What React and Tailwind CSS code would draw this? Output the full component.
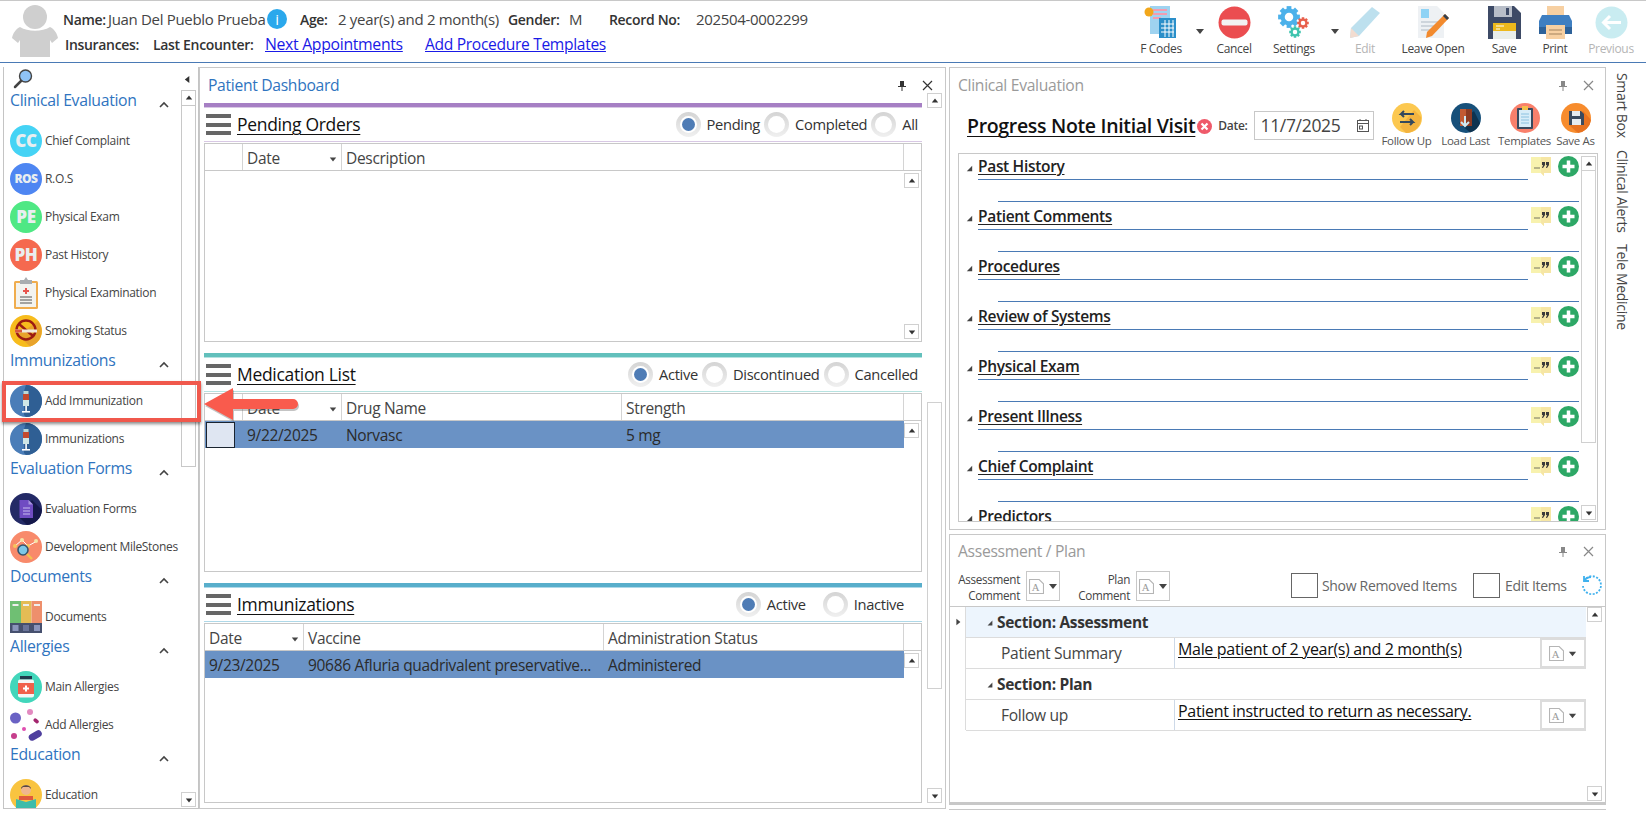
import { Fragment } from 'react'

const sideGroups = [
  { title: 'Clinical Evaluation', items: [['Chief Complaint', 'cc'], ['R.O.S', 'ros'], ['Physical Exam', 'pe'], ['Past History', 'ph'], ['Physical Examination', 'clip'], ['Smoking Status', 'smoke']] },
  { title: 'Immunizations', items: [['Add Immunization', 'syringe'], ['Immunizations', 'syringe']] },
  { title: 'Evaluation Forms', items: [['Evaluation Forms', 'form'], ['Development MileStones', 'mile']] },
  { title: 'Documents', items: [['Documents', 'docs']] },
  { title: 'Allergies', items: [['Main Allergies', 'bottle'], ['Add Allergies', 'pills']] },
  { title: 'Education', items: [['Education', 'edu']] },
]

const clinicalRows = ['Past History', 'Patient Comments', 'Procedures', 'Review of Systems', 'Physical Exam', 'Present Illness', 'Chief Complaint', 'Predictors']

function Tri({ dir = 'up', color = '#444', size = 8 }) {
  const pts = { up: '1,7 9,7 5,2', down: '1,3 9,3 5,8', left: '7,1 7,9 2,5', right: '3,1 3,9 8,5', corner: '8,2 8,8 2,8' }
  return (
    <svg width={size} height={size} viewBox="0 0 10 10" className="shrink-0">
      <polygon points={pts[dir]} fill={color} />
    </svg>
  )
}

function ScrollBtn({ dir, className = '' }) {
  return (
    <div className={`w-[15px] h-[15px] border border-[#d0d0d0] bg-white flex items-center justify-center shrink-0 ${className}`}>
      <Tri dir={dir} color="#333" />
    </div>
  )
}

function Gear({ cx, cy, r, color }) {
  const teeth = [0, 45, 90, 135]
  return (
    <g>
      {teeth.map(a => (
        <rect key={a} x={cx - r * 0.28} y={cy - r * 1.28} width={r * 0.56} height={r * 2.56} fill={color} transform={`rotate(${a} ${cx} ${cy})`} />
      ))}
      <circle cx={cx} cy={cy} r={r} fill={color} />
      <circle cx={cx} cy={cy} r={r * 0.5} fill="#fff" />
    </g>
  )
}

function Syringe() {
  return (
    <svg width="32" height="32" viewBox="0 0 32 32">
      <circle cx="16" cy="16" r="16" fill="#4a7db8" />
      <path d="M16 0a16 16 0 0 1 0 32l-2-2V6z" fill="#2f5f94" />
      <rect x="13.5" y="6" width="5" height="3" fill="#b9d8d8" />
      <rect x="13" y="9" width="6" height="6" fill="#c2492f" />
      <rect x="13" y="15" width="6" height="6" fill="#cfe6e6" />
      <rect x="15.3" y="21" width="1.6" height="5" fill="#fff" />
      <rect x="12" y="26" width="8" height="1.6" fill="#fff" />
    </svg>
  )
}

function LetterIcon({ text, bg, size = 'text-[17px]' }) {
  return (
    <div className={`w-[32px] h-[32px] rounded-full flex items-center justify-center font-extrabold text-[#e9eef0] ${size} ${bg}`}>{text}</div>
  )
}

function SideIcon({ kind }) {
  if (kind === 'cc') return <LetterIcon text="CC" bg="bg-[#45d3f5]" />
  if (kind === 'ros') return <LetterIcon text="ROS" bg="bg-[#4e86f2]" size="text-[12px] tracking-[-0.5px]" />
  if (kind === 'pe') return <LetterIcon text="PE" bg="bg-[#4fe884]" />
  if (kind === 'ph') return <LetterIcon text="PH" bg="bg-[#f5694f]" />
  if (kind === 'syringe') return <Syringe />
  if (kind === 'clip') return (
    <svg width="32" height="32" viewBox="0 0 32 32">
      <rect x="4" y="4" width="24" height="28" rx="1.5" fill="#f0ad4e" />
      <rect x="6" y="6" width="20" height="24" fill="#f3f3ef" />
      <path d="M10 7V3h4l2-3 2 3h4v4z" fill="#a9adb0" />
      <path d="M16 11v6M13 14h6" stroke="#e8554e" strokeWidth="2" />
      <path d="M10 20h12M10 23h12M10 26h12" stroke="#555" strokeWidth="1.2" />
    </svg>
  )
  if (kind === 'smoke') return (
    <svg width="32" height="32" viewBox="0 0 32 32">
      <circle cx="16" cy="16" r="16" fill="#f7bc1d" />
      <path d="M28 6a16 16 0 0 1-8 25.5L8 20z" fill="#e8a32c" />
      <circle cx="16" cy="15" r="9.5" fill="none" stroke="#9c1c12" strokeWidth="2.4" />
      <path d="M9 9l14 12" stroke="#9c1c12" strokeWidth="2.4" />
      <rect x="5" y="14.5" width="22" height="3" fill="#f2e9dc" />
      <rect x="5" y="14.5" width="7" height="3" fill="#d9573f" />
    </svg>
  )
  if (kind === 'form') return (
    <svg width="32" height="32" viewBox="0 0 32 32">
      <circle cx="16" cy="16" r="16" fill="#232a66" />
      <path d="M22 7l10 10a16 16 0 0 1-15 15l-8-8z" fill="#14184a" />
      <path d="M9.500 7h9l4.500 4.500V25h-13.500z" fill="#6f4cc2" />
      <path d="M18.500 7v4.500h4.500z" fill="#a795de" />
      <path d="M13 15h7M13 18h7M13 21h7" stroke="#c9bdf0" strokeWidth="1" />
    </svg>
  )
  if (kind === 'mile') return (
    <svg width="32" height="32" viewBox="0 0 32 32">
      <circle cx="16" cy="16" r="16" fill="#f88a6b" />
      <path d="M5 15l7-6 6 6 9-5" stroke="#fff" strokeWidth="1" fill="none" />
      <circle cx="5" cy="15" r="2" fill="#f7c65c" /><circle cx="12" cy="9" r="2" fill="#f5e3a5" /><circle cx="18" cy="15" r="2" fill="#f7c65c" /><circle cx="26" cy="10" r="2" fill="#f5e3a5" />
      <circle cx="13" cy="19" r="5" fill="#7cc7e6" stroke="#35536b" strokeWidth="1.6" />
      <path d="M17 23l5 5" stroke="#f2c14e" strokeWidth="2.4" />
    </svg>
  )
  if (kind === 'docs') return (
    <svg width="32" height="32" viewBox="0 0 32 32">
      <rect x="0" y="0" width="11" height="32" fill="#6fbf73" /><rect x="11" y="0" width="10.500" height="32" fill="#e4bc55" /><rect x="21.500" y="0" width="10.500" height="32" fill="#ee8f6c" />
      <rect x="0" y="22" width="32" height="10" fill="#46506e" />
      <rect x="2.500" y="24" width="6" height="6" fill="#8b95bb" /><rect x="13" y="24" width="6" height="6" fill="#6a7499" /><rect x="24" y="24" width="6" height="6" fill="#8b95bb" />
      <rect x="2.500" y="3" width="6" height="2" fill="#eee" /><rect x="13" y="3" width="6" height="2" fill="#eee" /><rect x="24" y="3" width="6" height="2" fill="#eee" />
    </svg>
  )
  if (kind === 'bottle') return (
    <svg width="32" height="32" viewBox="0 0 32 32">
      <circle cx="16" cy="16" r="16" fill="#42d6bb" />
      <rect x="10" y="5" width="12" height="3.500" fill="#1f3b4d" />
      <rect x="8" y="8.500" width="16" height="18" rx="2" fill="#f4f6f6" />
      <rect x="8" y="12" width="16" height="11" fill="#f0614b" />
      <path d="M16 14.500v6M13 17.500h6" stroke="#fff" strokeWidth="2" />
    </svg>
  )
  if (kind === 'pills') return (
    <svg width="32" height="32" viewBox="0 0 32 32">
      <circle cx="5.500" cy="9" r="5.500" fill="#6a62c4" />
      <circle cx="20" cy="3" r="3" fill="#e28ac0" />
      <rect x="23" y="10" width="6" height="3.600" rx="1.800" fill="#a3256e" transform="rotate(40 26 12)" />
      <circle cx="14" cy="20" r="2" fill="#e04fb0" />
      <circle cx="4" cy="27" r="3" fill="#c63f8c" />
      <rect x="18" y="23" width="14" height="7" rx="3.500" fill="#4f3f9e" transform="rotate(-30 25 26)" />
    </svg>
  )
  return (
    <svg width="32" height="32" viewBox="0 0 32 32">
      <circle cx="16" cy="16" r="16" fill="#f9c440" />
      <circle cx="16" cy="11" r="5" fill="#f0b68e" />
      <path d="M11 10c0-5 10-5 10 0l-2-2h-6z" fill="#5a4a42" />
      <path d="M9 17h14v4H9z" fill="#e05a3c" />
      <path d="M6 20l10 3 10-3v12H6z" fill="#3dbcaa" />
    </svg>
  )
}

function Sidebar() {
  return (
    <div className="w-[196px] h-[742px] ml-[3px] shrink-0 border-l border-r border-b border-[#c4c4c4] flex flex-col overflow-hidden">
      <div className="h-[22px] shrink-0 flex items-center justify-between pl-[9px] pr-[6px] mt-[1px]">
        <svg width="20" height="20" viewBox="0 0 20 20">
          <path d="M8 12L2 18" stroke="#444" strokeWidth="2.500" strokeLinecap="round" />
          <circle cx="12.500" cy="7" r="6" fill="#8fc3f7" stroke="#444" strokeWidth="1.400" />
        </svg>
        <Tri dir="left" color="#333" size={9} />
      </div>
      <div className="flex flex-1 min-h-0">
        <div className="w-[177px] overflow-hidden pl-[6px]">
          {sideGroups.map(g => (
            <Fragment key={g.title}>
              <div className="h-[22px] mb-[10px] flex items-center justify-between pr-[12px] text-[15.800px] text-[#2f74c0] leading-none">
                <span>{g.title}</span>
                <svg width="10" height="7" viewBox="0 0 10 7" className="mt-[6px]"><path d="M1 6l4-4 4 4" fill="none" stroke="#444" strokeWidth="1.600" /></svg>
              </div>
              {g.items.map(([label, kind]) => (
                <div key={label} className="h-[38px] flex items-center gap-[3px] text-[12px] text-[#444]">
                  <SideIcon kind={kind} />
                  <span>{label}</span>
                </div>
              ))}
            </Fragment>
          ))}
        </div>
        <div className="w-[15px] flex flex-col">
          <div className="h-[377px] border border-[#c8c8c8] flex flex-col">
            <div className="h-[15px] border-b border-[#c8c8c8] flex items-center justify-center"><Tri dir="up" color="#333" /></div>
          </div>
          <div className="flex-1" />
          <ScrollBtn dir="down" className="mb-[1px]" />
        </div>
      </div>
    </div>
  )
}

function Radio({ label, checked }) {
  return (
    <div className="flex items-center gap-[6px]">
      <div className="w-[25px] h-[25px] rounded-full bg-gradient-to-b from-[#d4d4d4] to-[#f0f0f0] flex items-center justify-center">
        <div className="w-[17px] h-[17px] rounded-full bg-white flex items-center justify-center">
          {checked && <div className="w-[13px] h-[13px] rounded-full bg-[#4f7cb5]" />}
        </div>
      </div>
      <span>{label}</span>
    </div>
  )
}

function Hamburger() {
  return (
    <div className="w-[25px] h-[21px] flex flex-col justify-between shrink-0">
      <div className="h-[4px] bg-[#666]" />
      <div className="h-[4px] bg-[#666]" />
      <div className="h-[4px] bg-[#666]" />
    </div>
  )
}

function Section({ title, lineClass, lightClass, radios, radioClass, columns, row, tableH, downArrow }) {
  return (
    <div className="w-[718px]">
      <div className={`h-[4px] ${lineClass}`} />
      <div className={`h-[1px] ${lightClass}`} />
      <div className="h-[33px] flex items-center pl-[2px] text-[14.700px] text-[#333]">
        <Hamburger />
        <span className="ml-[6px] text-[17.500px] text-[#111] underline underline-offset-[3px] decoration-1">{title}</span>
        <div className={`flex-1 flex items-center justify-end ${radioClass}`}>{radios}</div>
      </div>
      <div className={`h-[1px] mb-[1px] ${lightClass}`} />
      <div className={`border border-[#c8c8c8] flex flex-col ${tableH}`}>
        <div className="h-[27px] shrink-0 border-b border-[#c8c8c8] flex text-[15.500px] text-[#444]">
          {columns.map(c => (
            <div key={c.name || 'x'} className={`${c.w} border-r border-[#d4d4d4] flex items-center justify-between px-[4px] pt-[3px]`}>
              <span>{c.name}</span>
              {c.sort && <Tri dir="down" color="#444" />}
            </div>
          ))}
        </div>
        <div className="flex-1 min-h-0 flex">
          <div className="w-[699px]">{row}</div>
          <div className="flex-1 flex flex-col justify-between pt-[2px] pb-[2px]">
            <ScrollBtn dir="up" />
            {downArrow && <ScrollBtn dir="down" />}
          </div>
        </div>
      </div>
    </div>
  )
}

function PanelTitle({ title, active }) {
  return (
    <div className={`flex items-center justify-between text-[15.700px] ${active ? 'text-[#2f74c0]' : 'text-[#9a9a9a]'}`}>
      <span>{title}</span>
      <div className="flex items-center gap-[15px]">
        <svg width="10" height="12" viewBox="0 0 10 12"><path d="M3 1h4v5h2v1H5.500v4h-1V7H1V6h2z" fill={active ? '#333' : '#888'} /></svg>
        <svg width="11" height="11" viewBox="0 0 11 11"><path d="M1 1l9 9M10 1l-9 9" stroke={active ? '#333' : '#888'} strokeWidth="1.200" /></svg>
      </div>
    </div>
  )
}

function Dashboard() {
  return (
    <div className="w-[747px] h-[742px] shrink-0 border border-[#c8c8c8] flex flex-col">
      <div className="w-[733px] h-[35px] pl-[8px] pt-[6px]"><PanelTitle title="Patient Dashboard" active /></div>
      <div className="flex flex-1 min-h-0 pl-[4px]">
        <div className="flex flex-col gap-[11px]">
          <Section
            title="Pending Orders"
            lineClass="bg-[#a67fc4]"
            lightClass="bg-[#d8c8e4]"
            radioClass="gap-[4px] pr-[4px]"
            radios={<>
              <Radio label="Pending" checked /><Radio label="Completed" /><Radio label="All" />
            </>}
            columns={[{ name: '', w: 'w-[38px]' }, { name: 'Date', w: 'w-[99px]', sort: true }, { name: 'Description', w: 'w-[562px]' }]}
            tableH="h-[199px]"
            downArrow
          />
          <Section
            title="Medication List"
            lineClass="bg-[#62c0bc]"
            lightClass="bg-[#b6e2e0]"
            radioClass="gap-[4px] pr-[4px]"
            radios={<>
              <Radio label="Active" checked /><Radio label="Discontinued" /><Radio label="Cancelled" />
            </>}
            columns={[{ name: '', w: 'w-[38px]' }, { name: 'Date', w: 'w-[99px]', sort: true }, { name: 'Drug Name', w: 'w-[280px]' }, { name: 'Strength', w: 'w-[282px]' }]}
            tableH="h-[179px]"
            row={
              <div className="h-[27px] bg-[#6a92c5] flex items-center text-[15.500px] text-[#2b2b2b]">
                <div className="w-[38px] pl-[1px]"><div className="w-[29px] h-[26px] bg-[#dfe6f2] border border-[#1a2430]" /></div>
                <div className="w-[99px] px-[4px] pt-[2px]">9/22/2025</div>
                <div className="w-[280px] px-[4px] pt-[2px]">Norvasc</div>
                <div className="px-[4px] pt-[2px]">5 mg</div>
              </div>
            }
          />
          <Section
            title="Immunizations"
            lineClass="bg-[#58aecb]"
            lightClass="bg-[#aed8e8]"
            radioClass="gap-[17px] pr-[18px]"
            radios={<>
              <Radio label="Active" checked /><Radio label="Inactive" />
            </>}
            columns={[{ name: 'Date', w: 'w-[99px]', sort: true }, { name: 'Vaccine', w: 'w-[300px]' }, { name: 'Administration Status', w: 'w-[300px]' }]}
            tableH="h-[180px]"
            row={
              <div className="h-[27px] bg-[#6a92c5] flex items-center text-[15.500px] text-[#2b2b2b]">
                <div className="w-[99px] px-[4px] pt-[2px]">9/23/2025</div>
                <div className="w-[300px] px-[4px] pt-[2px] whitespace-nowrap">90686 Afluria quadrivalent preservative...</div>
                <div className="px-[4px] pt-[2px]">Administered</div>
              </div>
            }
          />
        </div>
        <div className="w-[15px] ml-[5px] flex flex-col -mt-[10px] pb-[5px]">
          <ScrollBtn dir="up" />
          <div className="h-[287px] mt-[294px] border border-[#d0d0d0]" />
          <div className="flex-1" />
          <ScrollBtn dir="down" />
        </div>
      </div>
    </div>
  )
}

function ActionIcon({ kind }) {
  if (kind === 'follow') return (
    <svg width="30" height="30" viewBox="0 0 30 30">
      <circle cx="15" cy="15" r="15" fill="#fcc850" />
      <path d="M22 7L29 14a15 15 0 0 1-15 16L8 24z" fill="#f3b33f" />
      <path d="M22 11H9l3-3M9 11l3 3M8 19h13l-3-3M21 19l-3 3" stroke="#34495e" strokeWidth="2" fill="none" />
    </svg>
  )
  if (kind === 'load') return (
    <svg width="30" height="30" viewBox="0 0 30 30">
      <circle cx="15" cy="15" r="15" fill="#17507a" />
      <path d="M23 8l6 12a15 15 0 0 1-10 9.500L8 20z" fill="#0e3350" />
      <rect x="9" y="6" width="12" height="17" fill="#c25a33" />
      <rect x="15" y="6" width="6" height="17" fill="#8c3a22" />
      <path d="M14 13v10M10 19l4 4 4-4" stroke="#cfe8f2" strokeWidth="2" fill="none" />
    </svg>
  )
  if (kind === 'templates') return (
    <svg width="30" height="30" viewBox="0 0 30 30">
      <circle cx="15" cy="15" r="15" fill="#f9806b" />
      <rect x="7" y="5" width="16" height="21" rx="1" fill="#3a4a5e" />
      <rect x="9" y="7" width="12" height="17" fill="#d8edf8" />
      <path d="M11 11h8M11 14h8M11 17h8M11 20h8" stroke="#8cc2e0" />
      <rect x="12" y="3" width="6" height="4" fill="#f5c04b" />
    </svg>
  )
  return (
    <svg width="30" height="30" viewBox="0 0 30 30">
      <circle cx="15" cy="15" r="15" fill="#f78c2d" />
      <path d="M22 8l8 9a15 15 0 0 1-13 13L8 22z" fill="#e8721f" />
      <path d="M8 8h12l3 3v11H8z" fill="#3a4a5e" />
      <rect x="11" y="8" width="8" height="5" fill="#e6ebef" />
      <rect x="11" y="16" width="9" height="6" fill="#e6ebef" />
    </svg>
  )
}

function ActionBtn({ kind, label, w }) {
  return (
    <div className={`flex flex-col items-center shrink-0 ${w}`}>
      <ActionIcon kind={kind} />
      <span className="text-[11.500px] text-[#555] mt-[1px] leading-[14px] whitespace-nowrap">{label}</span>
    </div>
  )
}

function NoteIcon() {
  return (
    <svg width="21" height="21" viewBox="0 0 21 21">
      <path d="M0 1h20v16h-7v3l-3-3H0z" fill="#f8f2ae" />
      <path d="M10 1h10v16h-7v3l-3-3z" fill="#f6e6a4" />
      <circle cx="4" cy="12" r=".7" fill="#444" /><circle cx="6" cy="12" r=".7" fill="#444" /><circle cx="8" cy="12" r=".7" fill="#444" />
      <path d="M11 6h3v3l-2 3h-1l1-3h-1zM15 6h3v3l-2 3h-1l1-3h-1z" fill="#3a3a3a" />
    </svg>
  )
}

function PlusIcon() {
  return (
    <svg width="21" height="21" viewBox="0 0 21 21">
      <circle cx="10.500" cy="10.500" r="10.500" fill="#2da866" />
      <path d="M10.500 4.500v12M4.500 10.500h12" stroke="#fff" strokeWidth="3.500" />
    </svg>
  )
}

function ClinicalPanel() {
  return (
    <div className="h-[463px] border border-[#c8c8c8] flex flex-col px-[8px]">
      <div className="h-[36px] pt-[6px] pr-[3px] shrink-0"><PanelTitle title="Clinical Evaluation" /></div>
      <div className="h-[49px] shrink-0 flex items-start">
        <div className="w-[290px] flex items-center pl-[9px] pt-[8px] h-[36px]">
          <span className="text-[19.500px] font-semibold text-[#111] underline underline-offset-[3px] decoration-1 whitespace-nowrap">Progress Note Initial Visit</span>
          <svg width="15" height="15" viewBox="0 0 15 15" className="ml-[2px] shrink-0">
            <circle cx="7.500" cy="7.500" r="7.500" fill="#ef5a6a" />
            <path d="M4.500 4.500l6 6M10.500 4.500l-6 6" stroke="#fff" strokeWidth="2.200" />
          </svg>
          <span className="ml-[6px] text-[12px] font-semibold text-[#444]">Date:</span>
        </div>
        <div className="ml-[7px] mt-[7px] w-[120px] h-[29px] border border-[#c8c8c8] flex items-center justify-between pl-[5px] pr-[3px] text-[17.500px] text-[#444]">
          <span>11/7/2025</span>
          <svg width="14" height="15" viewBox="0 0 14 15" fill="none" stroke="#555"><rect x="1.500" y="2.500" width="11" height="11" /><path d="M1.500 5.500h11M4 1v2M10 1v2" /><rect x="3.500" y="8" width="3" height="3" /></svg>
        </div>
        <div className="flex ml-[3px] mt-[-1px]">
          <ActionBtn kind="follow" label="Follow Up" w="w-[59px]" />
          <ActionBtn kind="load" label="Load Last" w="w-[59px]" />
          <ActionBtn kind="templates" label="Templates" w="w-[59px]" />
          <ActionBtn kind="save" label="Save As" w="w-[43px]" />
        </div>
      </div>
      <div className="h-[369px] w-[640px] border border-[#c8c8c8] flex overflow-hidden">
        <div className="w-[622px] shrink-0 overflow-hidden">
          {clinicalRows.map(r => (
            <div key={r} className="h-[50px] pl-[19px] shrink-0 relative">
              <div className="flex h-[26px]">
                <div className="w-[550px] border-b border-[#4a7ab5] flex items-center">
                  <span className="text-[15.500px] font-semibold text-[#222] underline underline-offset-[2px] decoration-1">{r}</span>
                </div>
                <div className="flex gap-[6px] ml-[3px] pt-[2px]"><NoteIcon /><PlusIcon /></div>
              </div>
              <div className="ml-[20px] mt-[21px] w-[581px] border-b border-[#4a7ab5]" />
              <div className="absolute left-[6px] top-[10px]"><Tri dir="corner" color="#444" size={9} /></div>
            </div>
          ))}
        </div>
        <div className="flex flex-col pt-[2px] pb-[1px]">
          <ScrollBtn dir="up" />
          <div className="h-[272px] border-l border-r border-b border-[#d0d0d0]" />
          <div className="flex-1" />
          <ScrollBtn dir="down" />
        </div>
      </div>
    </div>
  )
}

function CommentBtn({ small }) {
  return (
    <div className="flex items-center gap-[4px]">
      <svg width="15" height="15" viewBox="0 0 14 14">
        <path d="M.5.5h9l4 4v9H.5z" fill="#fff" stroke="#b5b5b5" />
        <text x="2.500" y="11" fontSize="10" fontFamily="Liberation Serif" fill="#999">A</text>
      </svg>
      <Tri dir="down" color="#444" size={small ? 9 : 10} />
    </div>
  )
}

function AssessRow({ label, value }) {
  return (
    <div className="h-[31px] flex border-b border-[#dcdcdc] text-[15.600px]">
      <div className="w-[209px] border-r border-[#cdd9e8] pl-[35px] pt-[2px] flex items-center text-[#444]">{label}</div>
      <div className="w-[365px] pl-[3px] text-[16px] text-[#111] leading-[22px]"><span className="underline underline-offset-[2px] decoration-1 whitespace-nowrap">{value}</span></div>
      <div className="w-[46px] border-2 border-[#dcdcdc] flex items-center justify-center"><CommentBtn small /></div>
    </div>
  )
}

function SectionRow({ label, blue }) {
  return (
    <div className={`h-[31px] flex items-center gap-[3px] pl-[20px] pt-[2px] border-b border-[#dcdcdc] text-[15.500px] font-bold text-[#333] ${blue ? 'bg-[#edf5fd]' : ''}`}>
      <Tri dir="corner" color="#444" />
      <span>{label}</span>
    </div>
  )
}

function AssessmentPanel() {
  return (
    <div className="h-[271px] mt-[4px] border border-[#c8c8c8] border-b-[3px] flex flex-col">
      <div className="h-[33px] pt-[5px] pl-[8px] pr-[11px] shrink-0"><PanelTitle title="Assessment / Plan" /></div>
      <div className="h-[38px] shrink-0 flex items-start pl-[6px] pt-[3px]">
        <div className="w-[64px] text-right text-[11.700px] leading-[16px] text-[#444]">Assessment<br />Comment</div>
        <div className="ml-[6px] w-[34px] h-[30px] border border-[#c8c8c8] flex items-center justify-center"><CommentBtn /></div>
        <div className="ml-[10px] w-[60px] text-right text-[11.700px] leading-[16px] text-[#444]">Plan<br />Comment</div>
        <div className="ml-[6px] w-[34px] h-[30px] border border-[#c8c8c8] flex items-center justify-center"><CommentBtn /></div>
        <div className="ml-[121px] mt-[2px] flex items-center">
          <div className="w-[27px] h-[25px] border border-[#666]" />
          <span className="ml-[4px] w-[151px] text-[14px] text-[#666] whitespace-nowrap">Show Removed Items</span>
          <div className="w-[27px] h-[25px] border border-[#666]" />
          <span className="ml-[5px] w-[76px] text-[14px] text-[#666] whitespace-nowrap">Edit Items</span>
          <svg width="22" height="22" viewBox="0 0 22 22" fill="none" stroke="#3fb1ee" strokeWidth="1.800">
            <path d="M3 6a9 9 0 1 1-1 5" strokeDasharray="2 1.500" />
            <path d="M3 6a9 9 0 0 1 7-4M3 1v5h5" />
          </svg>
        </div>
      </div>
      <div className="flex-1 min-h-0 border-t border-[#c8c8c8] flex">
        <div className="w-[16px] shrink-0 border-r border-[#dcdcdc] h-[123px] pt-[11px] pl-[4px]"><Tri dir="right" color="#444" /></div>
        <div className="w-[620px]">
          <SectionRow label="Section: Assessment" blue />
          <AssessRow label="Patient Summary" value="Male patient of 2 year(s) and 2 month(s)" />
          <SectionRow label="Section: Plan" />
          <AssessRow label="Follow up" value="Patient instructed to return as necessary." />
        </div>
        <div className="flex-1 flex flex-col justify-between pb-[1px] pl-[1px]">
          <ScrollBtn dir="up" />
          <ScrollBtn dir="down" />
        </div>
      </div>
    </div>
  )
}

function ToolIcon({ kind }) {
  if (kind === 'fcodes') return (
    <svg width="34" height="34" viewBox="0 0 34 34">
      <rect x="6" y="1" width="20" height="28" fill="#9fd3f0" />
      <path d="M9 5h14M9 9h14M9 13h8" stroke="#f29cb0" strokeWidth="2" />
      <circle cx="5" cy="7" r="4.500" fill="#f2a71b" />
      <rect x="15" y="13" width="17" height="20" fill="#2b8fc9" />
      <path d="M17 19h13M17 23h13M17 27h13M21 15v17M25 15v17M29 15v17" stroke="#fff" />
    </svg>
  )
  if (kind === 'cancel') return (
    <svg width="33" height="33" viewBox="0 0 33 33">
      <circle cx="16.500" cy="16.500" r="16" fill="#eb4d50" />
      <rect x="3.500" y="13.500" width="26" height="6" rx="2" fill="#f2f2f2" />
    </svg>
  )
  if (kind === 'settings') return (
    <svg width="34" height="34" viewBox="0 0 34 34">
      <Gear cx={12} cy={12} r={8.500} color="#4cb1ea" />
      <Gear cx={26} cy={18} r={4.500} color="#e8604c" />
      <Gear cx={18} cy={27} r={4.500} color="#3fc4ae" />
    </svg>
  )
  if (kind === 'edit') return (
    <svg width="34" height="34" viewBox="0 0 34 34">
      <path d="M24 2l8 6L11 31l-9 2 1-10z" fill="#bde0ee" />
      <path d="M3 23l8 8-9 2z" fill="#f2dcd0" />
    </svg>
  )
  if (kind === 'leave') return (
    <svg width="34" height="34" viewBox="0 0 34 34">
      <path d="M2 1h19l7 7v25H2z" fill="#eef1f4" />
      <rect x="5" y="4" width="8" height="9" fill="#8fd3f5" />
      <path d="M5 17h18M5 21h13M5 25h10" stroke="#c3cbd3" strokeWidth="1.500" />
      <path d="M29 9l4 4-17 18-6 2 1-6z" fill="#f28a2e" />
      <path d="M29 9l4 4-2 2-4-4z" fill="#33404f" />
    </svg>
  )
  if (kind === 'save') return (
    <svg width="33" height="33" viewBox="0 0 33 33">
      <path d="M0 0h26l7 7v26H0z" fill="#3d4a66" />
      <rect x="6" y="0" width="18" height="11" fill="#b8bec8" />
      <rect x="18" y="2" width="3" height="7" fill="#3d4a66" />
      <rect x="5" y="17" width="23" height="16" fill="#e9eeea" />
      <rect x="5" y="17" width="23" height="8" fill="#edb91c" />
      <path d="M8 20h8M8 23h4" stroke="#fff" />
    </svg>
  )
  if (kind === 'print') return (
    <svg width="33" height="33" viewBox="0 0 33 33">
      <rect x="8" y="0" width="17" height="10" fill="#f7d0a2" />
      <path d="M0 15l3-6h27l3 6v13H0z" fill="#3f7fc1" />
      <rect x="0" y="21" width="33" height="7" fill="#2e6299" />
      <rect x="7" y="19" width="19" height="14" fill="#f7d0a2" />
      <path d="M10 24h13M10 28h13" stroke="#a3835f" />
    </svg>
  )
  return (
    <svg width="33" height="33" viewBox="0 0 33 33">
      <circle cx="16.500" cy="16.500" r="16" fill="#c9ecf1" />
      <path d="M26 16.500H9M15 10l-6.500 6.500L15 23" stroke="#fff" strokeWidth="3" fill="none" />
    </svg>
  )
}

function ToolBtn({ kind, label, w, faded, caret }) {
  return (
    <div className={`relative flex flex-col items-center shrink-0 ${w}`}>
      <div className="h-[38px] flex items-center"><ToolIcon kind={kind} /></div>
      <span className={`text-[12px] leading-[16px] whitespace-nowrap ${faded ? 'text-[#b5b5b5]' : 'text-[#444]'}`}>{label}</span>
      {caret && <div className="absolute right-[-18px] top-[23px]"><Tri dir="down" color="#444" size={10} /></div>}
    </div>
  )
}

function Header() {
  return (
    <div className="h-[63px] shrink-0 border-t border-[#c8c8c8] border-b border-b-[#4a7ab5] flex justify-between">
      <div className="flex">
        <svg width="46" height="52" viewBox="0 0 46 52" className="ml-[12px] mt-[4px]">
          <ellipse cx="23" cy="12" rx="12" ry="12" fill="#cfcfcf" />
          <path d="M8 22c8 5 22 5 30 0 4 2 7 6 8 11l-6 5-2-3v17H8V35l-2 3-6-5c1-5 4-9 8-11z" fill="#cfcfcf" />
        </svg>
        <div className="ml-[5px] text-[15px] text-[#444]">
          <div className="h-[26px] mt-[5px] flex items-center">
            <span className="text-[14px] font-semibold text-[#333] w-[45px]">Name:</span>
            <span className="w-[158px] whitespace-nowrap">Juan Del Pueblo Prueba</span>
            <div className="ml-[1px] w-[20px] h-[20px] rounded-full bg-[#2aa8ec] text-white text-[15px] flex items-center justify-center">i</div>
            <span className="text-[14px] ml-[13px] w-[38px] font-semibold text-[#333]">Age:</span>
            <span className="w-[170px] whitespace-nowrap">2 year(s) and 2 month(s)</span>
            <span className="text-[14px] w-[61px] font-semibold text-[#333]">Gender:</span>
            <span className="w-[40px]">M</span>
            <span className="text-[14px] w-[87px] font-semibold text-[#333]">Record No:</span>
            <span>202504-0002299</span>
          </div>
          <div className="h-[25px] flex items-center pl-[2px]">
            <span className="text-[14px] w-[88px] font-semibold text-[#333]">Insurances:</span>
            <span className="text-[14px] w-[112px] font-semibold text-[#333] whitespace-nowrap">Last Encounter:</span>
            <span className="w-[160px] text-[15.800px] text-[#1a1ae6] underline">Next Appointments</span>
            <span className="text-[15.600px] text-[#1a1ae6] underline">Add Procedure Templates</span>
          </div>
        </div>
      </div>
      <div className="flex pt-[2px] pr-[10px]">
        <ToolBtn kind="fcodes" label="F Codes" w="w-[52px]" caret />
        <ToolBtn kind="cancel" label="Cancel" w="w-[58px] ml-[18px]" />
        <ToolBtn kind="settings" label="Settings" w="w-[56px] ml-[3px]" caret />
        <ToolBtn kind="edit" label="Edit" w="w-[40px] ml-[23px]" faded />
        <ToolBtn kind="leave" label="Leave Open" w="w-[70px] ml-[13px]" />
        <ToolBtn kind="save" label="Save" w="w-[40px] ml-[16px]" />
        <ToolBtn kind="print" label="Print" w="w-[40px] ml-[11px]" />
        <ToolBtn kind="previous" label="Previous" w="w-[50px] ml-[11px]" faded />
      </div>
    </div>
  )
}

export default function App() {
  return (
    <div className="relative w-[1646px] h-[815px] overflow-hidden bg-white flex flex-col font-['Open_Sans',sans-serif] tracking-[-0.02em]">
      <Header />
      <div className="flex pt-[4px]">
        <Sidebar />
        <Dashboard />
        <div className="w-[657px] h-[743px] ml-[3px] shrink-0 flex flex-col border-b border-[#c8c8c8]">
          <ClinicalPanel />
          <AssessmentPanel />
        </div>
        <div className="flex flex-col items-start pl-[6px] flex-1 gap-[12px] text-[14px] text-[#444] pt-[6px]">
          <span className="[writing-mode:vertical-rl]">Smart Box</span>
          <span className="[writing-mode:vertical-rl]">Clinical Alerts</span>
          <span className="[writing-mode:vertical-rl]">Tele Medicine</span>
        </div>
      </div>

      {/* red callout drawn over the page */}
      <div className="absolute left-[2px] top-[381px] w-[199px] h-[41px] border-[4px] border-[#f0584c] shadow-[0_2px_3px_rgba(0,0,0,0.45)]" />
      <svg className="absolute left-[202px] top-[386px]" width="98" height="38" viewBox="0 0 98 38">
        <path d="M2 18L31 2v11h60a5 5 0 0 1 0 10H31v11z" fill="#555" opacity=".35" transform="translate(1 2)" />
        <path d="M2 18L31 2v11h60a5 5 0 0 1 0 10H31v11z" fill="#f95b4d" />
      </svg>
    </div>
  )
}
